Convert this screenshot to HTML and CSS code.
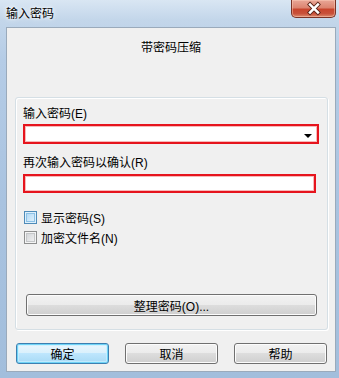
FILE: index.html
```html
<!DOCTYPE html>
<html lang="zh-CN">
<head>
<meta charset="utf-8">
<title>输入密码</title>
<link rel="stylesheet" href="styles.css">
</head>
<body>
<div class="window">
  <div class="titlebar">
    <span class="title">输入密码</span>
    <div class="close">
      <svg width="45" height="18" viewBox="0 0 45 18">
        <path d="M19.5 4.5 L27.5 12.5 M27.5 4.5 L19.5 12.5" stroke="#5a2418" stroke-width="4.4" stroke-linecap="square" fill="none"/>
        <path d="M19.5 4.5 L27.5 12.5 M27.5 4.5 L19.5 12.5" stroke="#ffffff" stroke-width="2.6" stroke-linecap="square" fill="none"/>
      </svg>
    </div>
  </div>
  <div class="client">
    <div class="heading">带密码压缩</div>
    <div class="group">
      <div class="label l1">输入密码(E)</div>
      <div class="combo"><span class="arrow"></span></div>
      <div class="label l2">再次输入密码以确认(R)</div>
      <div class="field"></div>
      <div class="checks">
        <div class="check"><span class="box focus"></span><span>显示密码(S)</span></div>
        <div class="check"><span class="box"></span><span>加密文件名(N)</span></div>
      </div>
      <div class="btn wide">整理密码(O)...</div>
    </div>
    <div class="buttons">
      <div class="btn default">确定</div>
      <div class="btn">取消</div>
      <div class="btn">帮助</div>
    </div>
  </div>
</div>
</body>
</html>
```

FILE: styles.css
```css
html, body {
  margin: 0;
  padding: 0;
}
body {
  width: 339px;
  height: 378px;
  overflow: hidden;
  font-family: "Liberation Sans", "Noto Sans CJK SC", sans-serif;
  font-size: 12px;
  color: #000000;
}
.window {
  width: 339px;
  height: 378px;
  display: flex;
  flex-direction: column;
  background: linear-gradient(to bottom, #d9e6f3 0px, #c3d6ea 20px, #b5cce6 60px, #a9c3e0 200px, #a2bedc 378px);
}
.titlebar {
  height: 27px;
  display: flex;
  justify-content: space-between;
  align-items: flex-start;
  flex: none;
}
.title {
  padding: 6px 0 0 6px;
  line-height: 16px;
  font-size: 12px;
  color: #000;
  text-shadow: 0 0 6px #ffffff, 0 0 3px #ffffff;
}
.close {
  width: 45px;
  height: 18px;
  margin-right: 3px;
  box-sizing: border-box;
  border: 1px solid #7a3326;
  border-top: none;
  border-radius: 0 0 5px 5px;
  background: linear-gradient(to bottom, #e9a797 0%, #dc8470 45%, #c8452d 55%, #c8513a 80%, #dc8b6f 100%);
  box-shadow: inset 0 0 0 1px rgba(255, 210, 190, 0.45);
  overflow: hidden;
  display: flex;
}
.close svg {
  display: block;
  margin-left: -1px;
}
.client {
  flex: none;
  margin: 0 3px 0 6px;
  height: 345px;
  box-sizing: border-box;
  border: 1px solid #9aaabb;
  background: #f0f0f0;
  display: flex;
  flex-direction: column;
}
.heading {
  margin-top: 12px;
  line-height: 16px;
  text-align: center;
}
.group {
  margin: 41px 7px 0 8px;
  border: 1px solid #d5dfe5;
  border-radius: 3px;
  box-shadow: inset 1px 1px 0 #ffffff, 1px 1px 0 #ffffff;
  padding: 0 8px 13px 7px;
  display: flex;
  flex-direction: column;
}
.label {
  line-height: 16px;
}
.l1 {
  margin-top: 8px;
}
.l2 {
  margin-top: 11px;
}
.combo {
  margin-top: 2px;
  height: 20px;
  box-sizing: border-box;
  border: 2px solid #e6141d;
  background: #ffffff;
  box-shadow: inset 0 0 0 1px #f6b9b9;
  display: flex;
  justify-content: flex-end;
  align-items: center;
  padding-right: 5px;
}
.arrow {
  width: 0;
  height: 0;
  margin-top: 3px;
  border-left: 4px solid transparent;
  border-right: 4px solid transparent;
  border-top: 4px solid #000000;
}
.field {
  margin-top: 3px;
  margin-right: 3px;
  height: 19px;
  box-sizing: border-box;
  border: 2px solid #e6141d;
  background: #ffffff;
  box-shadow: inset 0 0 0 1px #f6b9b9;
}
.checks {
  margin-top: 14px;
  display: flex;
  flex-direction: column;
}
.check {
  height: 20px;
  display: flex;
  align-items: center;
  gap: 4px;
  padding-left: 1px;
}
.box {
  width: 13px;
  height: 13px;
  box-sizing: border-box;
  border: 1px solid #8e8f8f;
  background: linear-gradient(135deg, #cdd0d4 0%, #f6f6f6 100%);
  box-shadow: inset 0 0 0 1px #f4f4f4, inset 0 0 0 2px #c4c6c8;
}
.box.focus {
  border-color: #4f8bb8;
  background: linear-gradient(135deg, #a9d4f4 0%, #e8f5fd 100%);
  box-shadow: inset 0 0 0 1px #def0fc, inset 0 0 0 2px #8cc1e6;
}
.btn {
  height: 21px;
  box-sizing: border-box;
  border: 1px solid #707070;
  border-radius: 3px;
  background: linear-gradient(to bottom, #f2f2f2 0%, #ebebeb 50%, #dddddd 50%, #cfcfcf 100%);
  box-shadow: inset 0 0 0 1px #fcfcfc;
  display: flex;
  justify-content: center;
  align-items: center;
  color: #000;
}
.wide {
  margin: 47px 2px 0 3px;
  height: 22px;
}
.buttons {
  margin: 13px 0 0 9px;
  display: flex;
  gap: 16px;
}
.buttons .btn {
  width: 93px;
}
.btn.default {
  border-color: #3c7fb1;
  background: linear-gradient(to bottom, #eaf6fd 0%, #d9f0fc 50%, #bee6fd 50%, #a7d9f5 100%);
  box-shadow: inset 0 0 0 1px #6fd3f6, inset 0 0 0 2px rgba(200, 240, 255, 0.7);
}
```
